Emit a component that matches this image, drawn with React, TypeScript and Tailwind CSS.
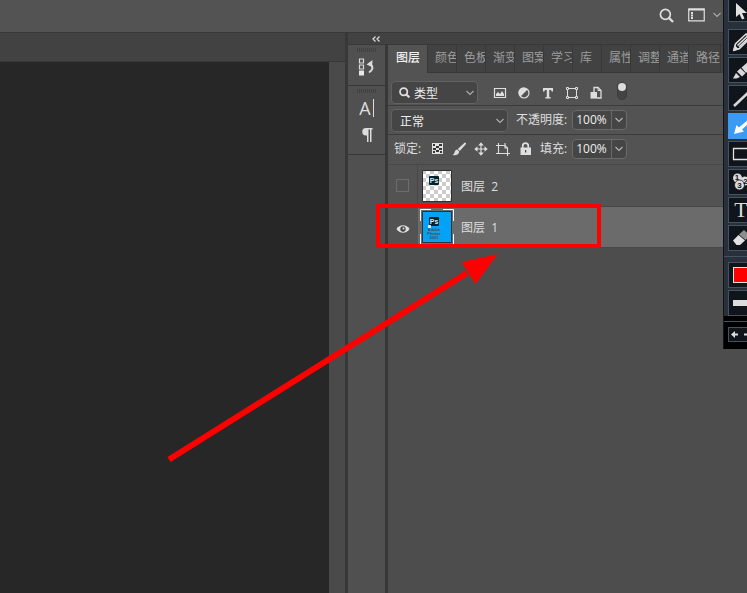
import React, { useState } from 'react';

const TABS = ['颜色', '色板', '渐变', '图案', '学习', '库', '属性', '调整', '通道', '路径'];

const Chevron = ({ className = '' }: { className?: string }) => (
  <svg className={className} width="8" height="6" viewBox="0 0 8 6" fill="none" stroke="currentColor" strokeWidth="1.1" aria-hidden="true">
    <path d="M0.5 1 L4 4.5 L7.5 1" />
  </svg>
);

const SearchIcon = ({ size, weight }: { size: number; weight: number }) => (
  <svg width={size} height={size} viewBox="0 0 16 16" fill="none" stroke="currentColor" strokeWidth={weight} aria-hidden="true">
    <circle cx="6.8" cy="6.8" r="5.3" />
    <path d="M10.8 10.8 L15 15" strokeWidth={weight + 0.6} />
  </svg>
);

const Grip = () => (
  <div className="h-1 w-5 bg-[repeating-linear-gradient(90deg,#404040_0_1px,transparent_1px_2px)]" />
);

/* Layer filter icons */
const filters = [
  {
    name: '像素图层',
    icon: (
      <svg width="14" height="14" viewBox="0 0 14 14" fill="currentColor">
        <path d="M1.500 2.500h11v9h-11z" fill="none" stroke="currentColor" strokeWidth="1.200" />
        <path d="M3 10V8l2-2 2 2 2-3 2 3v2z" />
      </svg>
    ),
  },
  {
    name: '调整图层',
    icon: (
      <svg width="14" height="14" viewBox="0 0 14 14">
        <circle cx="7" cy="7" r="5" fill="none" stroke="currentColor" strokeWidth="1.2" />
        <path d="M10.5 3.5 A5 5 0 1 0 3.5 10.5 Z" fill="currentColor" />
      </svg>
    ),
  },
  {
    name: '文字图层',
    icon: (
      <svg width="14" height="14" viewBox="0 0 14 14">
        <path d="M2 2h10v3.500h-1.300L10 4H8.200v7l1.500.2v1.300H4.300v-1.300l1.500-.2V4H4L3.300 5.500H2z" fill="currentColor" />
      </svg>
    ),
  },
  {
    name: '形状图层',
    icon: (
      <svg width="14" height="14" viewBox="0 0 14 14" fill="none" stroke="currentColor" strokeWidth="1">
        <path d="M3.5 2.5h7M3.5 11.5h7M2.5 3.5v7M11.5 3.5v7" />
        <path d="M1.5 1.5h2v2h-2zM10.5 1.5h2v2h-2zM1.5 10.5h2v2h-2zM10.5 10.5h2v2h-2z" />
      </svg>
    ),
  },
  {
    name: '智能对象',
    icon: (
      <svg width="14" height="14" viewBox="0 0 14 14">
        <path d="M5 6V1.500h4l3 3v7.500H8" fill="none" stroke="currentColor" strokeWidth="1.300" />
        <path d="M9 1.500v3h3" fill="none" stroke="currentColor" />
        <path d="M1.500 6H8v6.600H1.500z" fill="currentColor" />
      </svg>
    ),
  },
];

const locks = [
  {
    name: '锁定透明像素',
    icon: (
      <svg width="14" height="14" viewBox="0 0 14 14">
        <path d="M2 1h11v11H2z" fill="#e0e0e0" />
        <path d="M3 2h2v2H3zM9 2h3v2H9zM6 4h3v2H6zM3 6h3v2H3zM9 6h3v2H9zM6 8h3v2H6zM3 9h2v2H3zM10 9h2v2h-2z" fill="#353535" />
      </svg>
    ),
  },
  {
    name: '锁定图像像素',
    icon: (
      <svg width="14" height="14" viewBox="0 0 14 14" fill="currentColor">
        <path d="M14 1 12.800.5 5.800 7l2 2L14 2z" />
        <path d="M5.200 7.600 7.200 9.500c0 3-3.200 4.300-6.700 3.500 1.700-.7 1.700-1.700 2.200-3.200.4-1.200 1.300-2 2.500-2.200z" />
      </svg>
    ),
  },
  {
    name: '锁定位置',
    icon: (
      <svg width="14" height="14" viewBox="0 0 14 14" fill="currentColor">
        <path d="M6.400 3h1.200v3.400H11v1.200H7.600V11H6.400V7.600H3V6.400h3.400z" />
        <path d="M7 .3 9.800 3.500H4.200zM7 13.700 4.200 10.500h5.600zM.3 7l3.200-2.800v5.600zM13.700 7l-3.200 2.800V4.200z" />
      </svg>
    ),
  },
  {
    name: '防止嵌套',
    icon: (
      <svg width="14" height="14" viewBox="0 0 14 14" fill="none" stroke="currentColor" strokeWidth="1.100">
        <path d="M2.500 1v10.500M0 3.500h9l2.500 2.500V14M0 11.500h14" />
        <path d="M9 1v5h2.500" />
      </svg>
    ),
  },
  {
    name: '锁定全部',
    icon: (
      <svg width="14" height="14" viewBox="0 0 14 14">
        <path d="M4.700 6V4a2.800 2.800 0 0 1 5.600 0v2" fill="none" stroke="currentColor" strokeWidth="1.700" />
        <path d="M2.500 5.500h10.500v7.500H2.500z" fill="currentColor" />
        <path d="M7 8h1.200v2.500H7z" fill="#444" />
      </svg>
    ),
  },
];

/* Tools of the floating annotation bar */
const tools = [
  {
    name: 'Select',
    icon: <path d="M7 1v14l3.500-3 2.500 5.500 2.500-1L13 11h5z" transform="translate(0 6)" fill="#e2e2e2" />,
  },
  {
    name: 'Pencil',
    icon: (
      <g fill="none" stroke="#dcdcdc" strokeWidth="1.600">
        <path d="M5 20l1.500-6L17 4l4 4-10.500 10.500z" />
        <path d="M8.500 15.500 18.500 6M10 17 19.500 8" />
        <path d="M5 20l1-3.500 2.500 2.500z" fill="#dcdcdc" />
      </g>
    ),
  },
  {
    name: 'Marker',
    icon: (
      <g fill="#d8d8d8">
        <path d="M12.500 9.500 19 4l4 4-6 7z" />
        <path d="M8 13.500l3.500-3.200 5 5L13 18.500z" />
        <path d="M4 20.500 7 15l4 4-3.500 1.500z" />
      </g>
    ),
  },
  { name: 'Line', icon: <path d="M5 20 22 4" stroke="#d8d8d8" strokeWidth="2.600" /> },
  {
    name: 'Arrow',
    icon: <path d="M5 20l2.500-9 2.300 2.500L20 5l2 2.300-9 8.200 2 2z" fill="#ffffff" />,
  },
  { name: 'Rectangle', icon: <path d="M4.500 6.500h18v11h-18z" fill="none" stroke="#e0e0e0" strokeWidth="1.300" /> },
  {
    name: 'Counter',
    icon: (
      <g fill="#dadada">
        <circle cx="8.500" cy="8" r="4.500" />
        <circle cx="16" cy="11" r="4.500" />
        <circle cx="10.500" cy="15" r="5" stroke="#10151b" strokeWidth="0.800" />
        <g fill="#10151b" fontSize="8" fontWeight="700" textAnchor="middle" fontFamily="Liberation Sans, sans-serif">
          <text x="8" y="10">1</text>
          <text x="16.500" y="14">2</text>
          <text x="10.500" y="18">3</text>
        </g>
      </g>
    ),
  },
  {
    name: 'Text',
    icon: (
      <text x="12" y="19" textAnchor="middle" fontSize="22" fill="#dadada" fontFamily="Liberation Serif, serif">
        T
      </text>
    ),
  },
  {
    name: 'Eraser',
    icon: (
      <g>
        <path d="M4 14.500 9.500 9l6.500 5.500-5 4.500H7.500z" fill="#e2e2e2" />
        <path d="M10 8.500 15 4l6 5.500-4.500 4.500z" fill="#8d8d8d" />
      </g>
    ),
  },
];

const PsBadge = () => (
  <g>
    <rect x="7" y="6" width="10" height="9" rx="1" fill="#04202e" />
    <text x="12" y="13" textAnchor="middle" fontSize="7" fontWeight="700" fill="#d5eefa" fontFamily="Liberation Sans, sans-serif">
      Ps
    </text>
  </g>
);

const Percent = ({ id, label, value, onChange }: { id: string; label: string; value: string; onChange: (v: string) => void }) => (
  <div className="flex items-center">
    <label htmlFor={id} className="pr-[5px] whitespace-nowrap">
      {label}
    </label>
    <div className="flex h-5 w-[55px] rounded-sm border border-[#6a6a6a] bg-[#454545]">
      <input
        id={id}
        value={value}
        onChange={(e) => onChange(e.target.value)}
        className="w-[38px] min-w-0 pl-[3px] text-[#f0f0f0] outline-none"
      />
      <button aria-label={`${label}滑块`} className="flex flex-1 items-center justify-center border-l border-[#6a6a6a] text-[#b8b8b8]">
        <Chevron />
      </button>
    </div>
  </div>
);

const App: React.FC = () => {
  const [opacity, setOpacity] = useState('100%');
  const [fill, setFill] = useState('100%');

  return (
    <div className="relative flex min-h-screen flex-col overflow-hidden bg-[#535353] font-['Open_Sans','Noto_Sans_CJK_SC',sans-serif] text-xs leading-4 text-[#dedede]">
      {/* Options bar */}
      <header className="flex h-8 items-center justify-end pr-[26px] pb-0.5">
        <button aria-label="搜索" className="mr-3.5">
          <SearchIcon size={15} weight={1.8} />
        </button>
        <button aria-label="选择工作区" className="flex items-center">
          <svg width="17" height="14" viewBox="0 0 17 14" aria-hidden="true">
            <path d="M0.750 1.200h15.500v11.600H0.750z" fill="none" stroke="#e0e0e0" strokeWidth="1.200" />
            <path d="M0.500 0.500h16v2h-16zM3 4h2v2H3zM3 6.500h2v2H3zM3 9h2v2H3z" fill="#e0e0e0" />
          </svg>
          <Chevron className="ml-2 text-[#aaaaaa]" />
        </button>
      </header>

      <div className="flex flex-1 border-t border-[#383838]">
        {/* Document area */}
        <main className="flex min-w-0 flex-1 flex-col">
          <div className="h-[29px] border-b border-[#383838] bg-[#424242]" />
          <div className="flex flex-1">
            <div className="flex-1 bg-[#272727]" />
            <div className="w-4 bg-[#4a4a4a]" />
          </div>
        </main>

        <div className="flex w-[402px] shrink-0 flex-col bg-[#383838] pl-[3px]">
          <div className="flex h-[11px] items-center bg-[#424242] pl-6">
            <button aria-label="展开面板" className="text-[#e0e0e0]">
              <svg width="8" height="6" viewBox="0 0 8 6" fill="none" stroke="currentColor" strokeWidth="1.200">
                <path d="M3.500 0.500 1 3l2.500 2.500M7.500 0.500 5 3l2.500 2.500" />
              </svg>
            </button>
          </div>

          <div className="flex flex-1 gap-[3px] border-t border-[#383838]">
            {/* Collapsed dock */}
            <aside className="flex w-[37px] flex-col items-center bg-[#505050]">
              <div className="flex h-10 w-full flex-col items-center pt-[3px]">
                <Grip />
                <button aria-label="历史记录" className="mt-1.5">
                  <svg width="17" height="18" viewBox="0 0 17 18" fill="none">
                    <path d="M1.500 1h4v4h-4zM1.500 7h4v4h-4z" stroke="#dcdcdc" strokeWidth="1.200" />
                    <path d="M1 12.500h5v5H1z" fill="#e8e8e8" />
                    <path d="M8.500 6.500 14.500 2 14 9z" fill="#dcdcdc" />
                    <path d="M12.500 6c3 3 2.500 6-1.500 8.500" stroke="#dcdcdc" strokeWidth="2" />
                  </svg>
                </button>
              </div>
              <div className="flex h-[70px] w-full flex-col items-center border-y border-[#383838] pt-[3px]">
                <Grip />
                <button aria-label="字符" className="mt-1.5 flex h-[18px] items-center font-['Open_Sans',sans-serif] text-lg leading-none">
                  A<span className="ml-0.5 h-[18px] w-px bg-[#dcdcdc]" />
                </button>
                <button aria-label="段落" className="mt-2.5">
                  <svg width="12" height="16" viewBox="0 0 12 16" fill="#dcdcdc">
                    <path d="M11.500 1v1.500h-1V15H9V2.500H7.500V15H6V8.500H5A3.750 3.750 0 0 1 5 1z" />
                  </svg>
                </button>
              </div>
            </aside>

            {/* Layers panel */}
            <section className="flex flex-1 flex-col bg-[#4d4d4d] pr-6">
              <div role="tablist" className="flex h-7 bg-[#424242] text-[#9c9c9c]">
                <button role="tab" aria-selected="true" className="w-[39px] bg-[#535353] pb-0.5 pl-px font-medium text-[#f0f0f0]">
                  图层
                </button>
                {TABS.map((tab) => (
                  <button
                    key={tab}
                    role="tab"
                    aria-selected="false"
                    className="w-[29px] overflow-hidden border-b border-l border-[#383838] pb-0.5 pl-[7px] text-left whitespace-nowrap last:w-[33px] last:border-r"
                  >
                    {tab}
                  </button>
                ))}
              </div>

              <div className="flex h-[33px] items-end border-b border-[#3c3c3c] bg-[#535353] pb-px pl-[3px]">
                <div className="relative w-[87px]">
                  <span className="pointer-events-none absolute top-1.5 left-2">
                    <SearchIcon size={11} weight={2.6} />
                  </span>
                  <select aria-label="过滤类型" className="block h-[23px] w-full appearance-none rounded-sm border border-[#626262] bg-[#454545] pt-0.5 pl-[22px] text-[#eeeeee]">
                    <option>类型</option>
                  </select>
                  <Chevron className="pointer-events-none absolute top-[9px] right-1 text-[#b0b0b0]" />
                </div>
                <div className="mb-1 ml-[15px] flex gap-2.5">
                  {filters.map((f) => (
                    <button key={f.name} aria-label={f.name}>
                      {f.icon}
                    </button>
                  ))}
                </div>
                <button aria-label="切换图层过滤" className="mb-1 ml-3.5 flex h-[18px] w-2.5 justify-center rounded-full border border-[#3c3c3c] bg-[#434343]">
                  <span className="block size-2 shrink-0 rounded-full bg-[#dddddd]" />
                </button>
              </div>

              <div className="flex h-[29px] items-center border-b border-[#3c3c3c] bg-[#535353] pl-[3px]">
                <div className="relative mr-2 w-[117px]">
                  <select aria-label="混合模式" className="block h-[23px] w-full appearance-none rounded-sm border border-[#626262] bg-[#454545] pt-1 pl-2 text-[#eeeeee]">
                    <option>正常</option>
                  </select>
                  <Chevron className="pointer-events-none absolute top-[9px] right-1 text-[#b0b0b0]" />
                </div>
                <Percent id="opacity" label="不透明度:" value={opacity} onChange={setOpacity} />
              </div>

              <div className="flex h-[30px] items-center border-b border-[#484848] bg-[#535353] pb-px pl-1.5">
                <span className="w-9">锁定:</span>
                <div className="mr-2 flex gap-2">
                  {locks.map((l) => (
                    <button key={l.name} aria-label={l.name}>
                      {l.icon}
                    </button>
                  ))}
                </div>
                <Percent id="fill" label="填充:" value={fill} onChange={setFill} />
              </div>

              <ul>
                <li className="flex h-[42px] border-b border-[#474747] bg-[#535353]">
                  <div className="flex w-[30px] items-center justify-center border-r border-[#484848]">
                    <input type="checkbox" aria-label="显示图层 2" className="size-[13px] appearance-none border border-[#6c6c6c]" />
                  </div>
                  <svg className="mt-[5px] ml-1" width="30" height="32" viewBox="0 0 30 32">
                    <defs>
                      <pattern id="checker" width="8" height="8" patternUnits="userSpaceOnUse">
                        <path d="M0 0h8v8H0z" fill="#ffffff" />
                        <path d="M0 0h4v4H0zM4 4h4v4H4z" fill="#cccccc" />
                      </pattern>
                    </defs>
                    <path d="M0.500 0.500h29v31h-29z" fill="url(#checker)" stroke="#2e2e2e" />
                    <PsBadge />
                  </svg>
                  <span className="ml-[9px] self-center pt-0.5">图层&nbsp; 2</span>
                </li>
                <li className="flex h-[41px] border-b border-[#474747] bg-[#6b6b6b]">
                  <div className="relative flex w-[30px] items-center justify-center bg-[#535353]">
                    <input type="checkbox" defaultChecked aria-label="显示图层 1" className="size-[13px] appearance-none" />
                    <svg className="pointer-events-none absolute mt-1" width="14" height="10" viewBox="0 0 14 10">
                      <path d="M0.500 5C3.500 0 10.500 0 13.500 5 10.500 10 3.500 10 .5 5z" fill="#e0e0e0" />
                      <circle cx="7" cy="5" r="2.700" fill="#454545" />
                      <circle cx="7.500" cy="4.500" r="1" fill="#e0e0e0" />
                    </svg>
                  </div>
                  <svg className="mt-0.5 ml-0.5" width="34" height="36" viewBox="0 0 34 36">
                    <path d="M0.500 12V0.500H11M23 0.500h10.500V12M33.500 25v10.500M0.500 35.500V25" fill="none" stroke="#ffffff" />
                    <path d="M2.500 2.500h29v31h-29z" fill="#02a2f6" stroke="#333333" />
                    <g transform="translate(2 2)">
                      <PsBadge />
                      <path d="M6 14h3v3H6z" fill="#dceaf2" />
                      <g fill="#4b4a55" fontSize="4" fontWeight="700" textAnchor="middle" fontFamily="Liberation Sans, sans-serif">
                        <text x="12" y="20">Adobe</text>
                        <text x="12" y="24">Photos</text>
                        <text x="12" y="28">2021</text>
                      </g>
                    </g>
                  </svg>
                  <span className="ml-[7px] self-center pt-0.5">图层&nbsp; 1</span>
                </li>
              </ul>
            </section>
          </div>
        </div>
      </div>

      {/* Floating annotation tools, running off the right edge */}
      <div className="absolute top-0 right-0 h-[349px] w-6 overflow-hidden border-l border-[#11151b] bg-[#27303b]">
        <div className="-mt-1.5 ml-1 flex w-7 flex-col gap-0.5">
          {tools.map((tool) => (
            <button
              key={tool.name}
              aria-label={tool.name}
              className={
                tool.name === 'Arrow'
                  ? 'h-[26px] w-7 bg-[#3b9bf4] pl-px'
                  : 'h-[26px] w-7 border border-[#465260] bg-[#10151b] first:mb-[5px] first:h-7'
              }
            >
              <svg width="26" height="24" viewBox="0 0 26 24">
                {tool.icon}
              </svg>
            </button>
          ))}
        </div>
        <div className="mt-[5px] border-t border-[#465260] pt-[5px] pl-1">
          <button aria-label="Colour" className="flex h-[26px] w-7 items-center border border-[#465260] bg-[#10151b] pl-1">
            <span className="h-4 w-5 border border-[#e0e0e0] bg-[#ff0000]" />
          </button>
          <button aria-label="Width" className="mt-0.5 flex h-[26px] w-7 items-center border border-[#465260] bg-[#10151b] pl-1">
            <span className="h-1.5 w-5 bg-[#dcdcdc]" />
          </button>
        </div>
        <div className="h-9 bg-black pt-[5px]">
          <div className="border-t border-[#465260] pt-[5px] pl-1">
            <button aria-label="Undo" className="block h-[15px] w-7 border border-[#465260] bg-[#10151b]">
              <svg width="20" height="13" viewBox="0 0 20 13" fill="#dcdcdc">
                <path d="M2 6.500 6 3v2.500h3v2H6V10zM15 5.500h5v2h-5z" />
              </svg>
            </button>
          </div>
        </div>
      </div>

      {/* Red highlight and pointer */}
      <div className="pointer-events-none absolute top-[204px] right-[146px] h-11 w-[225px] border-4 border-[#ff0000]" />
      <svg className="pointer-events-none absolute top-[252px] right-[247px]" width="336" height="212" viewBox="0 0 336 212">
        <path d="M5 207.500 303 21" stroke="#ff0000" strokeWidth="6" />
        <path d="M334 2 297.500 10 311.500 32z" fill="#ff0000" />
      </svg>
    </div>
  );
};

export default App;
